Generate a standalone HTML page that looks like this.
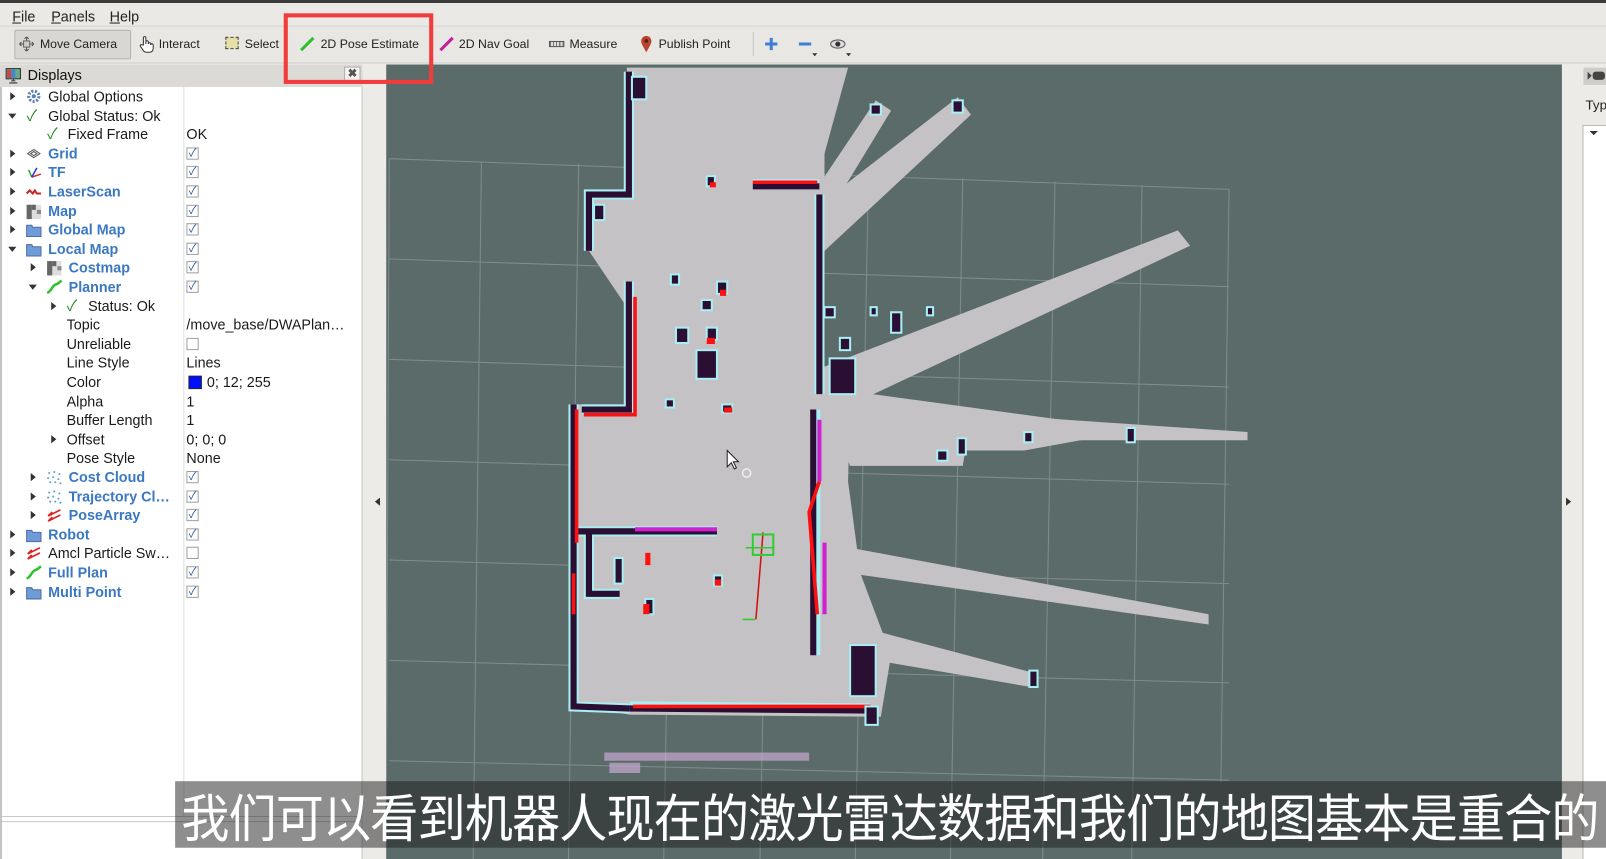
<!DOCTYPE html>
<html><head><meta charset="utf-8"><style>
*{margin:0;padding:0;box-sizing:border-box}
html,body{width:1606px;height:859px;overflow:hidden;background:#edebe8;font-family:"Liberation Sans","Noto Sans CJK SC",sans-serif}
#w{position:absolute;left:0;top:0;width:1568px;height:839px;transform:scale(1.02423,1.02384);transform-origin:0 0;background:#edebe8;overflow:hidden}
.a{position:absolute}
.menu span{position:absolute;top:5px;font-size:14px;color:#222}
.tb{position:absolute;top:36px;font-size:12px;color:#222}
.r{position:absolute;left:0;width:354px;height:19px;line-height:19px;font-size:14px;color:#1a1a1a}
.r>*{position:absolute}
.b{color:#3b78c2;font-weight:bold}
.ar{top:5px;width:0;height:0;border-left:5px solid #333;border-top:4px solid transparent;border-bottom:4px solid transparent}
.ad{top:7px;width:0;height:0;border-top:5px solid #333;border-left:4px solid transparent;border-right:4px solid transparent}
.cb{left:182px;top:3px;width:12px;height:12px;border:1px solid #a0a0a0;background:#fff;font-size:11px;line-height:10px;color:#2d5aa0;text-align:center}
.v{left:182px}
.ic{top:2px}
#sub{position:absolute;left:177px;top:766px;height:60px;white-space:nowrap;color:#fff;font-family:"Noto Sans CJK SC","WenQuanYi Zen Hei",sans-serif;font-size:47px;line-height:60px;transform:scaleY(1.08);transform-origin:0 50%}
#sub span{display:inline-block;width:46.13px;text-align:center}
</style></head><body><div id="w">
<div class="a" style="left:0;top:0;width:1568px;height:3px;background:#3c3c3c"></div>
<div class="menu a" style="left:0;top:3px;width:1568px;height:22px;background:#ebe9e6">
<span style="left:12px"><u>F</u>ile</span><span style="left:50px"><u>P</u>anels</span><span style="left:107px"><u>H</u>elp</span></div>
<div class="a" style="left:0;top:25px;width:1568px;height:37px;background:#e9e7e4;border-top:1px solid #d8d6d3;border-bottom:1px solid #cfcdca"></div>
<div class="a" style="left:14px;top:29px;width:114px;height:29px;background:#d9d7d3;border:1px solid #b5b2ad;border-radius:2px"></div>
<svg class="a" style="left:18px;top:35px" width="16" height="16" viewBox="0 0 16 16"><path d="M8 1v14M1 8h14M8 1l-2 2M8 1l2 2M8 15l-2-2M8 15l2-2M1 8l2-2M1 8l2 2M15 8l-2-2M15 8l-2 2" stroke="#555" fill="none"/><rect x="5" y="5" width="6" height="6" fill="#ccc" stroke="#666"/></svg>
<div class="tb" style="left:39px">Move Camera</div>
<svg class="a" style="left:135px;top:34px" width="16" height="18" viewBox="0 0 16 18"><path d="M5 10V3a1.2 1.2 0 0 1 2.4 0v6V7a1.2 1.2 0 0 1 2.4 0v2a1.2 1.2 0 0 1 2.4 0v1a1.2 1.2 0 0 1 2.4 0v3c0 3-2 4-4 4H8c-2 0-3-1-4-3L2 11c-.5-1 1-2 2-1z" fill="#fff" stroke="#333"/></svg>
<div class="tb" style="left:155px">Interact</div>
<div class="a" style="left:220px;top:36px;width:13px;height:12px;background:#e6e0a8;border:1px dashed #444"></div>
<div class="tb" style="left:239px">Select</div>
<svg class="a" style="left:292px;top:35px" width="16" height="16"><path d="M2 14L14 2" stroke="#2fbf2f" stroke-width="3"/></svg>
<div class="tb" style="left:313px">2D Pose Estimate</div>
<svg class="a" style="left:428px;top:35px" width="16" height="16"><path d="M2 14L14 2" stroke="#c0209a" stroke-width="3"/></svg>
<div class="tb" style="left:448px">2D Nav Goal</div>
<div class="a" style="left:536px;top:40px;width:15px;height:6px;border:1px solid #555;background:repeating-linear-gradient(90deg,#777 0 1px,#ddd 1px 3px)"></div>
<div class="tb" style="left:556px">Measure</div>
<svg class="a" style="left:625px;top:34px" width="12" height="18" viewBox="0 0 12 18"><path d="M6 17C2 10 1 8 1 6a5 5 0 0 1 10 0c0 2-1 4-5 11z" fill="#b8432f"/><circle cx="6" cy="6" r="1.8" fill="#5a1a10"/></svg>
<div class="tb" style="left:643px">Publish Point</div>
<div class="a" style="left:735px;top:31px;width:1px;height:24px;background:#c8c6c2"></div>
<svg class="a" style="left:746px;top:36px" width="14" height="14"><path d="M7 1v12M1 7h12" stroke="#3e7fd0" stroke-width="3"/></svg>
<svg class="a" style="left:779px;top:36px" width="20" height="20"><path d="M1 7h12" stroke="#3e7fd0" stroke-width="3"/><path d="M14 16h5l-2.5 3z" fill="#333"/></svg>
<svg class="a" style="left:810px;top:36px" width="22" height="20"><ellipse cx="8" cy="7" rx="7" ry="4" fill="#ddd" stroke="#555"/><circle cx="8" cy="7" r="2.5" fill="#333"/><path d="M16 16h5l-2.5 3z" fill="#333"/></svg>
<div class="a" style="left:0;top:63px;width:354px;height:22px;background:#dcdad6"></div>
<svg class="a" style="left:5px;top:66px" width="16" height="16"><rect x="1" y="1" width="14" height="10" fill="#6a8" stroke="#333"/><rect x="2" y="2" width="4" height="8" fill="#c44"/><rect x="6" y="2" width="4" height="8" fill="#48c"/><path d="M6 13h4M8 11v2M4 15h8" stroke="#333"/></svg>
<div class="a" style="left:27px;top:65px;font-size:14px;color:#111">Displays</div>
<div class="a" style="left:336px;top:65px;width:16px;height:14px;background:#f4f4f4;border:1px solid #aaa;font-size:11px;line-height:12px;text-align:center;color:#555;font-weight:bold">✖</div>
<div class="a" style="left:0;top:85px;width:354px;height:754px;background:#fff;border-left:2px solid #c6c4c0;border-right:1px solid #c6c4c0"></div>
<div class="a" style="left:179px;top:85px;width:1px;height:712px;background:#dedede"></div>
<div class="a" style="left:2px;top:797px;width:352px;height:1px;background:#c8c8c8"></div>
<div class="a" style="left:2px;top:802px;width:352px;height:1px;background:#c8c8c8"></div>

<div class="r" style="top:85px"><i class="ar" style="left:10px"></i><svg class="ic" style="left:26px" width="14" height="14"><circle cx="7" cy="7" r="5" fill="none" stroke="#5b7fb5" stroke-width="3" stroke-dasharray="2 1.5"/><circle cx="7" cy="7" r="2" fill="#5b7fb5"/></svg><span style="left:47px">Global Options</span></div>
<div class="r" style="top:103.6px"><i class="ad" style="left:8px"></i><span style="left:26px;color:#2a8a2a;font-size:15px">✓</span><span style="left:47px">Global Status: Ok</span></div>
<div class="r" style="top:122.2px"><span style="left:46px;color:#2a8a2a;font-size:15px">✓</span><span style="left:66px">Fixed Frame</span><span class="v">OK</span></div>
<div class="r" style="top:140.8px"><i class="ar" style="left:10px"></i><svg class="ic" style="left:26px" width="14" height="14"><path d="M1 7l6-4 6 4-6 4z M4 7l3-2 3 2-3 2z" fill="none" stroke="#555"/></svg><span class="b" style="left:47px">Grid</span><span class="cb">✓</span></div>
<div class="r" style="top:159.4px"><i class="ar" style="left:10px"></i><svg class="ic" style="left:25px" width="16" height="14"><path d="M6 12L3 5" stroke="#2a2" stroke-width="1.5"/><path d="M6 12l9-3" stroke="#c33" stroke-width="1.5"/><path d="M6 12L11 3" stroke="#33c" stroke-width="1.5"/></svg><span class="b" style="left:47px">TF</span><span class="cb">✓</span></div>
<div class="r" style="top:178px"><i class="ar" style="left:10px"></i><svg class="ic" style="left:25px" width="16" height="14"><path d="M1 9l3-3 3 3 2-3 2 3h4" stroke="#c22" stroke-width="2" fill="none"/></svg><span class="b" style="left:47px">LaserScan</span><span class="cb">✓</span></div>
<div class="r" style="top:196.6px"><i class="ar" style="left:10px"></i><svg class="ic" style="left:25px" width="16" height="16"><rect x="1" y="1" width="14" height="14" fill="#ddd"/><rect x="1" y="1" width="5" height="14" fill="#666"/><rect x="6" y="1" width="4" height="5" fill="#666"/><rect x="11" y="6" width="4" height="4" fill="#888"/></svg><span class="b" style="left:47px">Map</span><span class="cb">✓</span></div>
<div class="r" style="top:215.2px"><i class="ar" style="left:10px"></i><svg class="ic" style="left:25px" width="16" height="15"><path d="M1 3h5l1 2h8v9H1z" fill="#6f9bd6" stroke="#4a6fa5"/></svg><span class="b" style="left:47px">Global Map</span><span class="cb">✓</span></div>
<div class="r" style="top:233.8px"><i class="ad" style="left:8px"></i><svg class="ic" style="left:25px" width="16" height="15"><path d="M1 3h5l1 2h8v9H1z" fill="#6f9bd6" stroke="#4a6fa5"/></svg><span class="b" style="left:47px">Local Map</span><span class="cb">✓</span></div>
<div class="r" style="top:252.4px"><i class="ar" style="left:30px"></i><svg class="ic" style="left:45px" width="16" height="16"><rect x="1" y="1" width="14" height="14" fill="#ddd"/><rect x="1" y="1" width="5" height="14" fill="#666"/><rect x="6" y="1" width="4" height="5" fill="#666"/><rect x="11" y="6" width="4" height="4" fill="#888"/></svg><span class="b" style="left:67px">Costmap</span><span class="cb">✓</span></div>
<div class="r" style="top:271px"><i class="ad" style="left:28px"></i><svg class="ic" style="left:45px" width="16" height="15"><path d="M1 13C5 12 6 6 9 5s4-2 6-4" stroke="#2ec22e" stroke-width="2.5" fill="none"/></svg><span class="b" style="left:67px">Planner</span><span class="cb">✓</span></div>
<div class="r" style="top:289.6px"><i class="ar" style="left:50px"></i><span style="left:65px;color:#2a8a2a;font-size:15px">✓</span><span style="left:86px">Status: Ok</span></div>
<div class="r" style="top:308.2px"><span style="left:65px">Topic</span><span class="v">/move_base/DWAPlan…</span></div>
<div class="r" style="top:326.8px"><span style="left:65px">Unreliable</span><span class="cb"></span></div>
<div class="r" style="top:345.4px"><span style="left:65px">Line Style</span><span class="v">Lines</span></div>
<div class="r" style="top:364px"><span style="left:65px">Color</span><span style="left:184px;top:3px;width:13px;height:13px;background:#0010ff;border:1px solid #223"></span><span style="left:202px">0; 12; 255</span></div>
<div class="r" style="top:382.6px"><span style="left:65px">Alpha</span><span class="v">1</span></div>
<div class="r" style="top:401.2px"><span style="left:65px">Buffer Length</span><span class="v">1</span></div>
<div class="r" style="top:419.8px"><i class="ar" style="left:50px"></i><span style="left:65px">Offset</span><span class="v">0; 0; 0</span></div>
<div class="r" style="top:438.4px"><span style="left:65px">Pose Style</span><span class="v">None</span></div>
<div class="r" style="top:457px"><i class="ar" style="left:30px"></i><svg class="ic" style="left:45px" width="16" height="15"><g fill="#5aa0d8"><circle cx="3" cy="3" r="1"/><circle cx="8" cy="2" r="1"/><circle cx="13" cy="4" r="1"/><circle cx="2" cy="8" r="1"/><circle cx="7" cy="7" r="1"/><circle cx="12" cy="9" r="1"/><circle cx="4" cy="12" r="1"/><circle cx="9" cy="12" r="1"/><circle cx="14" cy="13" r="1"/></g></svg><span class="b" style="left:67px">Cost Cloud</span><span class="cb">✓</span></div>
<div class="r" style="top:475.6px"><i class="ar" style="left:30px"></i><svg class="ic" style="left:45px" width="16" height="15"><g fill="#5aa0d8"><circle cx="3" cy="3" r="1"/><circle cx="8" cy="2" r="1"/><circle cx="13" cy="4" r="1"/><circle cx="2" cy="8" r="1"/><circle cx="7" cy="7" r="1"/><circle cx="12" cy="9" r="1"/><circle cx="4" cy="12" r="1"/><circle cx="9" cy="12" r="1"/><circle cx="14" cy="13" r="1"/></g></svg><span class="b" style="left:67px">Trajectory Cl…</span><span class="cb">✓</span></div>
<div class="r" style="top:494.2px"><i class="ar" style="left:30px"></i><svg class="ic" style="left:45px" width="16" height="15"><path d="M2 8l12-6M2 13l12-6M6 4l-4 4M6 9l-4 4" stroke="#d22" stroke-width="1.6" fill="none"/></svg><span class="b" style="left:67px">PoseArray</span><span class="cb">✓</span></div>
<div class="r" style="top:512.8px"><i class="ar" style="left:10px"></i><svg class="ic" style="left:25px" width="16" height="15"><path d="M1 3h5l1 2h8v9H1z" fill="#6f9bd6" stroke="#4a6fa5"/></svg><span class="b" style="left:47px">Robot</span><span class="cb">✓</span></div>
<div class="r" style="top:531.4px"><i class="ar" style="left:10px"></i><svg class="ic" style="left:25px" width="16" height="15"><path d="M2 8l12-6M2 13l12-6M6 4l-4 4M6 9l-4 4" stroke="#d22" stroke-width="1.6" fill="none"/></svg><span style="left:47px">Amcl Particle Sw…</span><span class="cb"></span></div>
<div class="r" style="top:550px"><i class="ar" style="left:10px"></i><svg class="ic" style="left:25px" width="16" height="15"><path d="M1 13C5 12 6 6 9 5s4-2 6-4" stroke="#2ec22e" stroke-width="2.5" fill="none"/></svg><span class="b" style="left:47px">Full Plan</span><span class="cb">✓</span></div>
<div class="r" style="top:568.6px"><i class="ar" style="left:10px"></i><svg class="ic" style="left:25px" width="16" height="15"><path d="M1 3h5l1 2h8v9H1z" fill="#6f9bd6" stroke="#4a6fa5"/></svg><span class="b" style="left:47px">Multi Point</span><span class="cb">✓</span></div>

<div class="a" style="left:366px;top:486px;border-right:5px solid #333;border-top:4px solid transparent;border-bottom:4px solid transparent"></div>
<div class="a" style="left:1529px;top:486px;border-left:5px solid #333;border-top:4px solid transparent;border-bottom:4px solid transparent"></div>
<div class="a" style="left:1546px;top:66px;width:22px;height:17px;background:#cfcdca"></div>
<svg class="a" style="left:1550px;top:69px" width="18" height="10"><path d="M0 1l4 4-4 4z" fill="#444"/><rect x="5" y="1" width="12" height="8" rx="3" fill="#444"/></svg>
<div class="a" style="left:1548px;top:95px;font-size:13px;color:#222">Typ</div>
<div class="a" style="left:1545px;top:122px;width:23px;height:717px;background:#fff;border-left:1px solid #b8b6b2;border-top:1px solid #b8b6b2"></div>
<div class="a" style="left:1552px;top:128px;border-top:4px solid #333;border-left:4px solid transparent;border-right:4px solid transparent"></div>

<svg class="a" style="left:377px;top:63px" width="1148" height="776" viewBox="377 63 1148 776">
<rect x="377" y="63" width="1148" height="776" fill="#5b6b69"/>
<g stroke="#7f8d8b" stroke-width="1">
<line x1="380" y1="155" x2="1200" y2="185"/><line x1="380" y1="253" x2="1200" y2="280"/><line x1="380" y1="351" x2="1200" y2="378"/><line x1="380" y1="449" x2="1200" y2="473"/><line x1="380" y1="547" x2="1200" y2="570"/><line x1="380" y1="645" x2="1200" y2="667"/><line x1="380" y1="743" x2="1200" y2="762"/>
<line x1="380" y1="155" x2="377" y2="839"/><line x1="470" y1="158" x2="462" y2="839"/><line x1="565" y1="160" x2="555" y2="839"/><line x1="660" y1="163" x2="648" y2="839"/><line x1="755" y1="167" x2="742" y2="839"/><line x1="848" y1="170" x2="835" y2="839"/><line x1="940" y1="174" x2="928" y2="839"/><line x1="1030" y1="177" x2="1018" y2="839"/><line x1="1115" y1="181" x2="1105" y2="839"/><line x1="1200" y1="185" x2="1192" y2="765"/>
</g>
<g fill="#c4c2c4">
<polygon points="620,66 828,66 805,150 805,380 830,400 828,470 840,560 870,640 860,700 615,698 565,690 558,395 612,395 612,300 575,245 572,190 612,185 612,66"/>
<polygon points="800,360 1150,225 1162,240 810,405"/>
<polygon points="820,395 1218,422 1218,430 820,430"/>
<polygon points="815,380 1110,420 1000,440 830,440"/>
<polygon points="830,535 1180,600 1180,610 830,560"/>
<polygon points="850,615 1012,658 1012,672 855,645"/>
<polygon points="800,200 935,95 948,112 805,245"/>
<polygon points="800,180 855,98 870,108 805,215"/>
<polygon points="805,390 945,425 940,455 830,455"/>
</g>
<g fill="none" stroke-linejoin="miter">
<g stroke="#a8eef2" stroke-width="10">
<polyline points="614,70 614,190 575,190 575,245"/><polyline points="614,275 614,400 568,400"/><polyline points="560,395 560,690 615,692"/><polyline points="615,690 850,692"/><polyline points="800,190 800,385"/><polyline points="735,180 800,180"/><polyline points="560,519 700,519"/><polyline points="796,400 796,640"/><polyline points="575,520 575,580 605,580"/>
</g>
<g stroke="#2b0f33" stroke-width="6">
<polyline points="614,70 614,190 575,190 575,245"/><polyline points="614,275 614,400 568,400"/><polyline points="560,395 560,690 615,692"/><polyline points="615,692 850,694"/><polyline points="800,190 800,385"/><polyline points="735,182 800,182"/><polyline points="560,519 700,519"/><polyline points="794,400 794,640"/><polyline points="575,520 575,580 605,580"/>
</g>
<g stroke="#ff1010" stroke-width="3.5">
<polyline points="620,290 620,405 570,405"/><polyline points="563,400 563,530"/><polyline points="618,690 850,690"/><polyline points="735,178 798,178"/><polyline points="800,470 790,500 798,600"/><polyline points="560,560 560,600"/>
</g>
<g stroke="#d020d0" stroke-width="4"><polyline points="620,517 700,517"/><polyline points="800,410 800,470"/><polyline points="805,530 805,600"/><polyline points="840,630 840,680"/></g>
</g>
<g fill="#2b0f33" stroke="#a8eef2" stroke-width="2">
<rect x="617" y="75" width="14" height="22"/><rect x="690" y="172" width="8" height="10"/><rect x="655" y="268" width="8" height="10"/><rect x="700" y="275" width="10" height="12"/><rect x="685" y="293" width="10" height="10"/><rect x="660" y="320" width="12" height="15"/><rect x="690" y="320" width="10" height="12"/><rect x="680" y="342" width="20" height="28"/><rect x="705" y="395" width="10" height="8"/><rect x="650" y="390" width="8" height="8"/><rect x="805" y="300" width="10" height="10"/><rect x="820" y="330" width="10" height="12"/><rect x="850" y="300" width="6" height="8"/><rect x="870" y="305" width="10" height="20"/><rect x="905" y="300" width="6" height="8"/><rect x="930" y="98" width="10" height="12"/><rect x="850" y="102" width="10" height="10"/><rect x="1000" y="422" width="8" height="10"/><rect x="1100" y="418" width="8" height="14"/><rect x="935" y="428" width="8" height="16"/><rect x="915" y="440" width="10" height="10"/><rect x="1005" y="655" width="8" height="16"/><rect x="697" y="562" width="8" height="10"/><rect x="630" y="585" width="8" height="15"/><rect x="600" y="545" width="8" height="25"/><rect x="830" y="630" width="25" height="50"/><rect x="845" y="690" width="12" height="18"/><rect x="810" y="350" width="25" height="35"/><rect x="580" y="200" width="10" height="15"/></g>
<g fill="#ff1010"><rect x="693" y="178" width="6" height="5"/><rect x="703" y="283" width="6" height="6"/><rect x="690" y="330" width="8" height="6"/><rect x="707" y="398" width="8" height="5"/><rect x="630" y="540" width="5" height="12"/><rect x="698" y="566" width="6" height="6"/><rect x="628" y="590" width="6" height="10"/></g>
<g fill="#c8a8d0" opacity="0.7"><rect x="590" y="735" width="200" height="8"/><rect x="595" y="745" width="30" height="10"/></g>
<path d="M745 520L738 605" stroke="#d01010" stroke-width="1.5"/>
<rect x="735" y="522" width="20" height="20" fill="none" stroke="#3c3" stroke-width="2"/>
<path d="M728 535h28M725 605h12" stroke="#3c3" stroke-width="1.5"/>
<path d="M710 440v16l4-4 3 6 2-1-3-6h5z" fill="#fff" stroke="#222" stroke-width="1"/>
<circle cx="729" cy="462" r="4" fill="none" stroke="#eee" stroke-width="1.5"/>
</svg>

<div class="a" style="left:171px;top:763px;width:1397px;height:65px;background:rgba(30,30,30,0.5)"></div>
<div id="sub"><span>我</span><span>们</span><span>可</span><span>以</span><span>看</span><span>到</span><span>机</span><span>器</span><span>人</span><span>现</span><span>在</span><span>的</span><span>激</span><span>光</span><span>雷</span><span>达</span><span>数</span><span>据</span><span>和</span><span>我</span><span>们</span><span>的</span><span>地</span><span>图</span><span>基</span><span>本</span><span>是</span><span>重</span><span>合</span><span>的</span></div>
<div class="a" style="left:277px;top:13px;width:146px;height:69px;border:4px solid #f23c3c"></div>
</div></body></html>
